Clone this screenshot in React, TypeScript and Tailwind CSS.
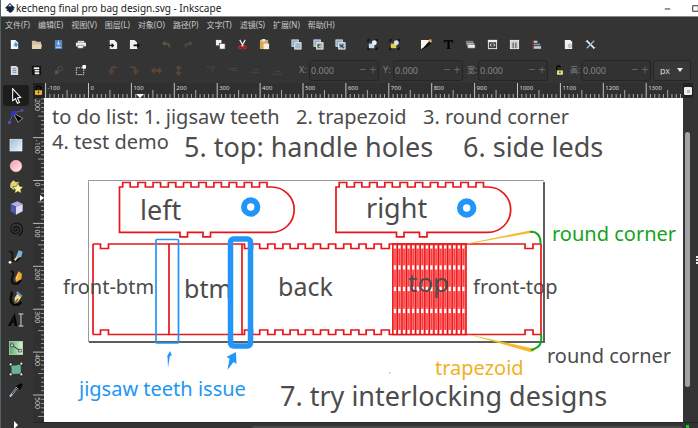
import React from "react";

const UI_FONT = "font-['Noto_Sans','Noto_Sans_CJK_SC',sans-serif]";
const NOTE_FONT = "font-['Noto_Sans',sans-serif]";

function Glyph({ children, big }: { children: React.ReactNode; big?: boolean }) {
  return (
    <svg viewBox="0 0 12 12" className={big ? "h-4 w-4 shrink-0" : "h-[11px] w-[11px] shrink-0"} aria-hidden="true">
      {children}
    </svg>
  );
}

const windows = (
  <>
    <rect x="1" y="1" width="7" height="7" fill="#8fa9bd" stroke="#dce6ee" strokeWidth="1" />
    <rect x="4" y="4" width="7" height="7" fill="#9db9ce" stroke="#e8eef2" strokeWidth="1" />
  </>
);

const commandGroups: { name: string; art: React.ReactNode }[][] = [
  [
    { name: "New", art: <><path d="M2 1h5l3 3v7H2z" fill="#f4f6f7" /><path d="M7 3l3 3-2 3-3-2z" fill="#5e9cd0" /></> },
    { name: "Open", art: <><path d="M1 2h4l1 1h5v7H1z" fill="#cfc0a6" /><path d="M2 6h10l-1 5H1z" fill="#e6d6ba" /></> },
    { name: "Save", art: <><rect x="2" y="1" width="8" height="10" rx="1" fill="#4f86c6" /><path d="M6 2v4M4 4.500l2 2 2-2M3 9h6" stroke="#dbe9f8" fill="none" /></> },
    { name: "Print", art: <><path d="M3 2h7v2H3z" fill="#ddd" /><rect x="1" y="4" width="11" height="4" fill="#e9e9e9" /><path d="M3 7h6v3H3z" fill="#fff" stroke="#555" strokeWidth=".6" /></> },
  ],
  [
    { name: "Import", art: <><path d="M3 1h5l3 3v7H3z" fill="#f4f4f4" /><path d="M2 7h4M5 5l2 2-2 2" stroke="#111" strokeWidth="1.300" fill="none" /></> },
    { name: "Export", art: <><path d="M1 1h5l3 3v7H1z" fill="#eee" /><path d="M5 6h4V4l3 3-3 3V8H5z" fill="#080808" /></> },
  ],
  [
    { name: "Undo", art: <path d="M5 2L1 5l4 3V6c4 0 4 2 3 5 4-4 2-7-3-7z" fill="#53613c" /> },
    { name: "Redo", art: <path d="M7 2l4 3-4 3V6C3 6 3 8 4 11 0 7 2 4 7 4z" fill="#43543b" /> },
  ],
  [
    { name: "Copy", art: <><rect x="1" y="1" width="6" height="6" fill="#eee" /><rect x="5" y="5" width="6" height="6" fill="#fafafa" stroke="#444" strokeWidth=".7" /></> },
    { name: "Cut", art: <><path d="M3 1l4 7M9 1L5 8" stroke="#eee" strokeWidth="1.300" /><circle cx="3.500" cy="9" r="1.600" fill="none" stroke="#d81f1f" strokeWidth="1.400" /><circle cx="8.500" cy="9" r="1.600" fill="none" stroke="#d81f1f" strokeWidth="1.400" /></> },
    { name: "Paste", art: <><rect x="1" y="1" width="9" height="10" fill="#d9a958" /><rect x="3" y="0" width="4" height="3" fill="#ddd" /><path d="M5 5h6v6H5z" fill="#f5efe2" /></> },
  ],
  [
    { name: "Duplicate", art: windows },
    { name: "Clone", art: <>{windows}<path d="M5 9V6h3v4z" fill="#2a2a2a" /><circle cx="7.500" cy="8" r="1.300" fill="#e9d36e" /></> },
    { name: "Unlink clone", art: <>{windows}<path d="M5 6l5 4M6 9l3-3" stroke="#2f4652" strokeWidth="1.200" /></> },
  ],
  [
    { name: "Group", art: <><path d="M1 3V1h2M9 1h2v2M11 9v2H9M3 11H1V9" stroke="#080808" fill="none" strokeWidth="1.200" /><rect x="2" y="5" width="6" height="5" fill="#c7dcea" /><circle cx="8" cy="4" r="2.700" fill="#edf4f8" /></> },
    { name: "Ungroup", art: <><path d="M1 3V1h2M9 1h2v2M11 9v2H9M3 11H1V9" stroke="#080808" fill="none" strokeWidth="1.200" /><rect x="2" y="5" width="6" height="5" fill="#e6cb4a" /><circle cx="8" cy="4" r="2.700" fill="#d8e4ee" /></> },
  ],
  [
    { name: "Fill and stroke", art: <><path d="M0 1h10L3 9l-3 2z" fill="#f6f6ee" /><path d="M1 11.500l8-8.500 2 2-7 5z" fill="#0a0a0a" /><path d="M8 1l3-1 1 3-2 1z" fill="#d4ab4a" /></> },
    { name: "Text and font", art: <path d="M1 1h10v3h-1L9 2.500H7.200V10l1.300.5v.5h-5v-.5L4.800 10V2.500H3L2 4H1z" fill="#050505" /> },
    { name: "Layers", art: <><path d="M1 2h8v4H1z" fill="#888" /><path d="M2 4h8v4H2z" fill="#bbb" stroke="#444" strokeWidth=".5" /><path d="M3 6h8v4H3z" fill="#ececec" stroke="#555" strokeWidth=".5" /></> },
    { name: "XML editor", art: <><rect x="1.500" y="1.500" width="9" height="9" fill="#444" stroke="#eee" /><path d="M1 1h10v2.500H1z" fill="#eee" /><path d="M5 5L3.500 6.500 5 8M7 5l1.500 1.500L7 8" stroke="#fff" fill="none" /></> },
    { name: "Selectors", art: <><rect x="1.500" y="1.500" width="9" height="9" fill="#ccc" stroke="#f0f0f0" /><path d="M4.500 4v6M7.500 4v6" stroke="#555" strokeWidth="1.200" /></> },
    { name: "Align", art: <><path d="M2 0v12" stroke="#b02020" /><path d="M3 2h4v2H3zM3 8h8v2.500H3z" fill="#c4d2dc" /><path d="M3 5h7v2H3z" fill="#7795ac" /></> },
  ],
  [
    { name: "Document properties", art: <><path d="M2 1h6l2 2v8H2z" fill="#f2f2f2" /><circle cx="7.500" cy="7.500" r="2" fill="#c9cdd0" stroke="#999" strokeWidth=".5" /></> },
    { name: "Preferences", art: <><path d="M2 2l8 8" stroke="#eee" strokeWidth="1.700" /><path d="M10 2L2 10" stroke="#93b5d0" strokeWidth="1.500" /><path d="M1 3l2-2M9 11l2-2" stroke="#fff" /></> },
  ],
];

const selectorGroups: { name: string; art: React.ReactNode }[][] = [
  [
    { name: "Select all", art: <><path d="M2 1h6l2 2v8H2z" fill="#d6dde2" /><path d="M4 4h4M4 6h4M4 8h4" stroke="#6d8ba2" /></> },
    { name: "Select in layers", art: <><rect x="1" y="1" width="10" height="10" fill="#111" /><path d="M3 2.500h6v2H3zM4 5.500h5v1.500H4zM4 8h5v2H4z" fill="#eee" /></> },
    { name: "Deselect", art: <><circle cx="8" cy="4" r="2.500" fill="none" stroke="#505050" /><path d="M2 6h4v4H2z" fill="#545454" /></> },
    { name: "Touch selection", art: <><rect x="1.500" y="3" width="8" height="7.500" fill="none" stroke="#eee" strokeDasharray="1.500 1" /><rect x="8" y="0" width="4" height="4" rx="1" fill="#fff" /></> },
  ],
  [
    { name: "Rotate left", art: <path d="M11 2C5 0 3 3 4 6H1l4 5 3-5H6c0-2 1-3 5-2z" fill="#594336" /> },
    { name: "Rotate right", art: <path d="M1 2c6-2 8 1 7 4h3l-4 5-3-5h2c0-2-1-3-5-2z" fill="#594336" /> },
    { name: "Flip horizontal", art: <path d="M0 6l4-4v3h4V2l4 4-4 4V7H4v3z" fill="#654431" /> },
    { name: "Flip vertical", art: <path d="M6 0l4 4H7v4h3l-4 4-4-4h3V4H2z" fill="#584536" /> },
  ],
  [
    { name: "Raise to top", art: <path d="M1 2h10M6 4h5M7 7h2" stroke="#474747" /> },
    { name: "Raise", art: <path d="M1 4h10M5 6h6" stroke="#484848" /> },
    { name: "Lower", art: <path d="M5 5h5M1 8h10" stroke="#484848" /> },
    { name: "Lower to bottom", art: <path d="M5 7h5M1 10h11" stroke="#51493f" /> },
  ],
];

const toolGroups: { name: string; art: React.ReactNode }[][] = [
  [
    { name: "Selector", art: <path d="M3.500 .5v9L5.600 8l1.500 3.500 1.500-.7L7.100 7.500 9.500 7z" fill="#111" stroke="#fff" strokeWidth=".8" /> },
    { name: "Node editor", art: <><path d="M1 10L4 3l7-2" stroke="#5256b4" fill="none" strokeWidth=".7" /><path d="M4 3l7 4-3.500 3z" fill="#050505" stroke="#ccc" strokeWidth=".5" /><rect x="2.500" y="1.500" width="3" height="3" fill="#2830ee" /><rect x="9.500" y="0" width="2" height="2" fill="#4c51b4" /><rect x="0" y="9" width="2.300" height="2.300" fill="#4c51b4" /></> },
  ],
  [
    { name: "Rectangle", art: <><defs><linearGradient id="sky" x2="1" y2="1"><stop stopColor="#9dbcdc" /><stop offset="1" stopColor="#eff7ff" /></linearGradient></defs><rect x="1.500" y="1.700" width="9" height="8.800" fill="url(#sky)" stroke="#e8f2f8" strokeWidth=".5" /></> },
    { name: "Ellipse", art: <><defs><linearGradient id="rose" x2="1" y2="1"><stop stopColor="#ff94a8" /><stop offset="1" stopColor="#fff0f0" /></linearGradient></defs><circle cx="6" cy="6" r="4.300" fill="url(#rose)" stroke="#f5c9ce" strokeWidth=".5" /></> },
    { name: "Star", art: <><path d="M4 1l2 1.500 2-.5v3L7 7 4 8 1.500 6 2 3z" fill="#e3d36d" /><path d="M7.500 3l1.200 2.500 2.800.3-2 2 .5 2.900-2.500-1.400L5 10.700l.5-2.900-2-2 2.800-.3z" fill="#fbf39b" stroke="#302f22" strokeWidth=".4" /></> },
    { name: "3D box", art: <><path d="M2 3l5-2 4 2-5 2z" fill="#aeb0e8" /><path d="M2 3l4 2v6L2 8.500z" fill="#5556a4" /><path d="M6 5l5-2v5.500L6 11z" fill="#d9dafa" /></> },
    { name: "Spiral", art: <path d="M6 6.500c.5-1 1.500.5 0 1C4 8 3.500 4.500 6 4.200c3.500-.2 3.800 5 0 5.300C1 10 .5 2 6 1.500c5.500-.2 6.500 7 2 9.500" fill="none" stroke="#101010" strokeWidth=".8" /> },
  ],
  [
    { name: "Pencil", art: <><path d="M1 2c5-1 0 7 4 7s4-4 5-4" stroke="#111" strokeWidth="1.300" fill="none" /><path d="M8 1l3 1-1 4-3 1-1-1z" fill="#7fb4d4" /><path d="M7 6L5 8.500" stroke="#edd08c" strokeWidth="1.500" /><circle cx="1.500" cy="10" r="1" fill="#fff" /></> },
    { name: "Pen", art: <><path d="M2 1c5 0-2 7 2 9s5-2 6-3" stroke="#0c0c0c" strokeWidth="1.500" fill="none" /><path d="M8 1l2.500 2-.5 4-4 2-.5-3z" fill="#f1a934" /><path d="M8 1l-1 5-1.500 2z" fill="#ffe5a0" /></> },
    { name: "Calligraphy", art: <><path d="M2 1c3 0-3 6 2 9 3 1 5 0 6-2" stroke="#080808" strokeWidth="1.700" fill="none" /><path d="M7 2l3 2.500-2 3L5 9.500V5z" fill="#f2d893" /><path d="M7 0l4 3.500-1 1-4-3z" fill="#6b92bb" /><path d="M5 9l2.500-3" stroke="#3d331d" strokeWidth=".8" /></> },
    { name: "Text", art: <><path d="M0 10.500L5 1l2 9.500H5L4.500 8H3l-1 2.500zM4 4L3.300 6.800h1z" fill="#050505" fillRule="evenodd" /><path d="M8 1.500h3.500M8 10.500h3.500M9.700 1.500v9" stroke="#aaa" /></> },
  ],
  [
    { name: "Gradient", art: <><defs><linearGradient id="leaf" x2="1"><stop stopColor="#58a66a" /><stop offset="1" stopColor="#dff5df" /></linearGradient></defs><rect x="1" y="1" width="10" height="10" fill="url(#leaf)" stroke="#b6dcba" strokeWidth=".5" /><path d="M3 4l6 4" stroke="#222" strokeWidth=".7" /><path d="M2 3h2v2H2zM8 7h2v2H8z" fill="#d9f6db" stroke="#222" strokeWidth=".5" /></> },
    { name: "Mesh", art: <><path d="M2 3c3 1 5 0 8-1-1 3 0 6 0 8-3-1-5 0-8 0 1-2 1-4 0-7z" fill="#6bb196" /><path d="M1 1.500h2v2H1zM9 1h2v2H9zM9 9h2v2H9zM1 9h2v2H1z" fill="#fff" stroke="#111" strokeWidth=".5" /></> },
    { name: "Dropper", art: <><path d="M1.500 11L7 4" stroke="#a9cbd2" strokeWidth="1.500" /><path d="M3 9l5-6" stroke="#111" strokeWidth=".7" /><path d="M6 3l3 3 2-4-1-1z" fill="#050505" /></> },
  ],
];

const menus = ["文件(F)", "编辑(E)", "视图(V)", "图层(L)", "对象(O)", "路径(P)", "文字(T)", "滤镜(S)", "扩展(N)", "帮助(H)"];

const PITCH = 42.9;

function HorizontalRuler() {
  return (
    <svg className="block h-[15px] w-full bg-[#303030]" aria-label="Horizontal ruler">
      {Array.from({ length: 149 }, (_, i) => i - 10).map((n) => {
        const x = 44.5 + (n * PITCH) / 10;
        const major = n % 10 === 0;
        return (
          <g key={n}>
            <path d={`M${x} ${major ? 0 : n % 5 === 0 ? 7 : 11}V15`} stroke={major ? "#c4c4c4" : "#aaaaaa"} />
            {major && <text x={x + 2} y="7" fontSize="6" fill="#d8d8d8">{n * 10}</text>}
          </g>
        );
      })}
      <path d="M92 11h8l-4 4z" fill="#fff" />
    </svg>
  );
}

function VerticalRuler() {
  return (
    <svg className="block min-h-0 w-[11px] flex-1 bg-[#303030]" aria-label="Vertical ruler">
      {Array.from({ length: 76 }, (_, i) => i - 20).map((n) => {
        const y = 82.5 + (n * PITCH) / 10;
        const major = n % 10 === 0;
        return (
          <g key={n}>
            <path d={`M${major ? 0 : n % 5 === 0 ? 5 : 8} ${y}H11`} stroke={major ? "#bbbbbb" : "#999999"} />
            {major && (
              <text transform={`translate(2 ${y + 2}) rotate(90)`} fontSize="7" fill="#c4c4c4">
                {n * 10}
              </text>
            )}
          </g>
        );
      })}
      <path d="M7 97v6l4-3z" fill="#fff" />
    </svg>
  );
}

function sidePanel(x: number) {
  let d = `M${x} 187H${x + 3.2}`;
  for (let k = 0; k < 10; k++) {
    const s = x + 3.2 + k * 15.2;
    d += `V182.500H${s + 7.5}V187H${k < 9 ? s + 15.2 : x + 152}`;
  }
  return d + `A22.700 22.700 0 0 1 ${x + 152} 232.400H${x + 91}V236.800H${x + 83.5}V232.400H${x + 68}V236.800H${x + 60.5}V232.400H${x}Z`;
}

function stripEdge(y: number, depth: number) {
  const teeth = [100.5, ...Array.from({ length: 10 }, (_, k) => 244.5 + k * 15.2), 525];
  return `M93 ${y}` + teeth.map((t) => `H${t}V${y + depth}H${t + 8}V${y}`).join("") + "H541";
}

function Drawing() {
  return (
    <svg viewBox="44 98 639 324" className="absolute left-0 top-0 h-[324px] w-[639px]" aria-label="Bag cutting pattern">
      <path d="M88.500 342V180.500H544" fill="none" stroke="#9a9a9a" />
      <path d="M544 182V342H89" fill="none" stroke="#5e5e5e" strokeWidth="2" />
      <g fill="none" stroke="#e5171a" strokeWidth="1.700">
        <path d={sidePanel(119.5)} />
        <path d={sidePanel(336)} />
        <path d={stripEdge(244, 4.5)} />
        <path d={stripEdge(334.5, -4.5)} />
        <path d="M93 244V334.500M541 244V334.500M169 244V334.500M242 244V334.500" />
      </g>
      <rect x="392" y="244" width="75" height="91" fill="#ff7676" />
      {[245.5, 265.5, 287, 309, 330].map((y) =>
        Array.from({ length: 16 }, (_, i) => (
          <rect key={`${y}-${i}`} x={393.6 + i * 4.57} y={y} width="2.400" height={y === 245.5 ? 3 : 4} fill="#fff" />
        )),
      )}
      {Array.from({ length: 17 }, (_, i) => (
        <path key={i} d={`M${392.8 + i * 4.57} 244V335`} stroke="#ea1216" strokeWidth="1.300" />
      ))}
      {[249, 270, 291.5, 313.5].map((y, r) =>
        Array.from({ length: 16 }, (_, i) => (
          <path key={`${r}-${i}`} d={`M${395 + i * 4.57} ${y}v16`} stroke="#f3282c" strokeWidth=".8" />
        )),
      )}
      <path d="M392 244H467M392 334.500H467" stroke="#e5171a" strokeWidth="1.700" />
      <path d="M467 243.500L530 230.500l3 2-65 11.500z" fill="#f3ba2c" />
      <path d="M467 334l64 14 4 3-5 1z" fill="#f3ba2c" />
      <path d="M530 232c6-1 11 3 10.500 12M541 334c1 9 0 13-10 16" stroke="#14a41c" strokeWidth="2" fill="none" />
      <rect x="389" y="372" width="1.500" height="1.500" fill="#f3ba2c" />
    </svg>
  );
}

function Markup() {
  return (
    <svg viewBox="44 98 639 324" className="pointer-events-none absolute left-0 top-0 h-[324px] w-[639px]" aria-label="Problem areas">
      <g fill="none" stroke="#2196f8">
        <circle cx="250.700" cy="207" r="6.700" strokeWidth="6" />
        <circle cx="466.700" cy="208" r="6.700" strokeWidth="6" />
        <rect x="156" y="239.500" width="22.500" height="103.500" rx="1" strokeWidth="1.700" />
        <rect x="230.500" y="239" width="20" height="107" rx="3" strokeWidth="5.500" />
      </g>
      <path d="M170 351l2 5-2-.5-2 12-.500-11-1 1zM236 352l-9.500 5 3 1.500-2 11.500 6-8 3 2z" fill="#2196f8" />
    </svg>
  );
}

const labels: { text: string; cls: string }[] = [
  { text: "left", cls: "left-[96px] top-[98px] text-[27px]" },
  { text: "right", cls: "left-[322px] top-[96px] text-[27px]" },
  { text: "front-btm", cls: "left-[19px] top-[179px] text-[20px]" },
  { text: "btm", cls: "left-[140px] top-[178px] text-[25px]" },
  { text: "back", cls: "left-[234px] top-[176px] text-[25px]" },
  { text: "top", cls: "left-[364px] top-[171px] text-[26px]" },
  { text: "front-top", cls: "left-[429px] top-[179px] text-[20px]" },
  { text: "round corner", cls: "left-[508px] top-[126px] text-[20px] text-[#15a31b]" },
  { text: "round corner", cls: "left-[503px] top-[248px] text-[20px]" },
  { text: "trapezoid", cls: "left-[391px] top-[260px] text-[20px] text-[#f2b11c]" },
  { text: "jigsaw teeth issue", cls: "left-[35px] top-[281px] text-[20px] text-[#2196f3]" },
  { text: "7. try interlocking designs", cls: "left-[236px] top-[284px] text-[27px]" },
  { text: "to do list: 1. jigsaw teeth", cls: "left-[8px] top-[9px] text-[20px]" },
  { text: "2. trapezoid", cls: "left-[252px] top-[9px] text-[20px]" },
  { text: "3. round corner", cls: "left-[379px] top-[9px] text-[20px]" },
  { text: "4. test demo", cls: "left-[8px] top-[34px] text-[20px]" },
  { text: "5. top: handle holes", cls: "left-[140px] top-[35px] text-[27px]" },
  { text: "6. side leds", cls: "left-[419px] top-[35px] text-[27px]" },
];

function IconBar({ groups }: { groups: { name: string; art: React.ReactNode }[][] }) {
  return (
    <div className="flex shrink-0 gap-[10px]">
      {groups.map((group, i) => (
        <div key={i} className="flex">
          {group.map((item) => (
            <button key={item.name} type="button" aria-label={item.name} className="flex h-5 w-[22px] items-center justify-center">
              <Glyph>{item.art}</Glyph>
            </button>
          ))}
        </div>
      ))}
    </div>
  );
}

function NumberField({ id, label, labelClass }: { id: string; label: string; labelClass: string }) {
  return (
    <div className="flex shrink-0 items-center text-[9px] text-[#858585]">
      <label htmlFor={id} className={labelClass}>{label}</label>
      <div className="flex h-[21px] w-[70px] items-center rounded-[3px] border border-[#252525] bg-[#323232]">
        <input id={id} defaultValue="0.000" className="h-full w-0 min-w-0 flex-1 bg-transparent pl-px outline-none" />
        <button type="button" aria-label={`Decrease ${label}`} className="w-[10px] text-[12px] leading-none text-[#666]">−</button>
        <button type="button" aria-label={`Increase ${label}`} className="w-[10px] text-[12px] leading-none text-[#666]">+</button>
      </div>
    </div>
  );
}

function Padlock() {
  return (
    <Glyph>
      <path d="M3.500 6V3.500c0-3 5-3 5 0V6" fill="none" stroke="#050505" strokeWidth="1.500" />
      <rect x="2" y="5.500" width="8" height="5.500" fill="#f3b63c" stroke="#141414" strokeWidth=".5" />
      <path d="M6 7v2" stroke="#221900" strokeWidth="1.300" />
    </Glyph>
  );
}

export default function App() {
  return (
    <div className={`flex h-screen flex-col overflow-hidden border-l border-[#53616b] bg-[#343434] ${UI_FONT}`}>
      <header className="flex h-[17px] shrink-0 items-center justify-between overflow-hidden border-b border-[#8b8b8b] bg-white pl-1 text-[10px] text-[#181818]">
        <div className="flex items-center gap-px">
          <svg viewBox="0 0 12 12" className="h-[10px] w-[10px]" aria-hidden="true">
            <path d="M6 0l6 6-2 1 1 1.500-2 .5.5 1L6 12 4 10l-2.500-1L3 7.500 0 6z" fill="#10243c" />
            <path d="M6 1.500l2 2-1 .8L6 3.500l-1 1-1-1z" fill="#dceaf5" />
          </svg>
          <h1 className="leading-none">kecheng final pro bag design.svg - Inkscape</h1>
        </div>
        <div className="-mr-[11px] flex">
          <button type="button" aria-label="Minimize" className="flex h-4 w-7 items-center justify-center"><Glyph><path d="M3 6.500h6" stroke="#222" /></Glyph></button>
          <button type="button" aria-label="Maximize" className="flex h-4 w-7 items-center justify-center"><Glyph><rect x="3" y="3" width="6" height="6" fill="none" stroke="#222" /></Glyph></button>
        </div>
      </header>

      <nav className="flex h-[15px] shrink-0 items-center gap-2 pl-1 text-[8px] text-[#c9c9c9]">
        {menus.map((m) => (
          <button key={m} type="button" className="whitespace-nowrap leading-none">{m}</button>
        ))}
      </nav>

      <div className="flex h-[25px] shrink-0 items-center pl-[2px]">
        <IconBar groups={commandGroups} />
      </div>

      <div className="flex h-[26px] shrink-0 items-center pl-[2px]">
        <IconBar groups={selectorGroups} />
        <div className="ml-3 flex gap-1">
          <NumberField id="pos-x" label="X:" labelClass="w-[10px]" />
          <NumberField id="pos-y" label="Y:" labelClass="w-[10px]" />
          <NumberField id="size-w" label="宽:" labelClass="w-[11px] text-[8px]" />
        </div>
        <button type="button" aria-label="Lock proportions" className="flex h-5 w-[22px] shrink-0 items-center justify-center">
          <Glyph>
            <path d="M3 6V3c0-3 4-2 4 0" fill="none" stroke="#050505" strokeWidth="1.500" />
            <rect x="3" y="5.500" width="7" height="5.500" fill="#ebe08b" stroke="#111" strokeWidth=".6" />
            <path d="M6.500 7v2" stroke="#111" strokeWidth="1.200" />
          </Glyph>
        </button>
        <NumberField id="size-h" label="高:" labelClass="w-[11px] text-[8px]" />
        <div className="ml-[2px] grid shrink-0 items-center">
          <select aria-label="Unit" className="col-start-1 row-start-1 h-[21px] w-[38px] appearance-none rounded-[3px] border border-[#252525] bg-[#383838] pl-[6px] text-[9px] leading-none text-[#d0d0d0]">
            <option>px</option>
            <option>mm</option>
          </select>
          <svg viewBox="0 0 6 4" className="pointer-events-none col-start-1 row-start-1 mr-2 h-1 w-[6px] justify-self-end" aria-hidden="true"><path d="M0 0h6L3 4z" fill="#e8e8e8" /></svg>
        </div>
      </div>

      <div className="flex min-h-0 flex-1">
        <aside className="flex w-8 shrink-0 flex-col gap-[7px] overflow-hidden pl-[2px] pt-[2px]">
          {toolGroups.map((group, g) => (
            <div key={g} className="flex shrink-0 flex-col">
              {group.map((t) => (
                <button
                  key={t.name}
                  type="button"
                  aria-label={t.name}
                  className={t.name === "Selector" ? "flex h-[21px] w-[26px] items-center justify-center rounded-[3px] bg-[#1d1d1d]" : "flex h-[21px] w-[26px] items-center justify-center"}
                >
                  <Glyph big>{t.art}</Glyph>
                </button>
              ))}
            </div>
          ))}
          <button type="button" aria-label="More tools" className="mt-[14px] flex w-[26px] justify-center">
            <svg viewBox="0 0 6 8" className="h-2 w-[6px]" aria-hidden="true"><path d="M1 0l4 4-4 4z" fill="#fff" /></svg>
          </button>
        </aside>

        <div className="flex min-w-0 flex-1 flex-col">
          <div className="flex min-h-0 flex-1">
            <div className="flex w-[11px] shrink-0 flex-col">
              <button type="button" aria-label="Lock guides" className="flex h-[15px] items-center justify-center bg-[#202020]"><Padlock /></button>
              <VerticalRuler />
            </div>
            <div className="flex min-w-0 flex-1 flex-col">
              <HorizontalRuler />
              <main className={`relative min-h-0 flex-1 overflow-hidden bg-white text-[#4c4c4c] ${NOTE_FONT}`}>
                <Drawing />
                {labels.map((l, i) => (
                  <p key={i} className={`absolute whitespace-nowrap leading-none ${l.cls}`}>{l.text}</p>
                ))}
                <Markup />
              </main>
            </div>
            <div className="flex w-[15px] shrink-0 flex-col items-start">
              <button type="button" aria-label="Color managed view" className="flex h-[15px] w-[10px] items-center justify-center rounded-[2px] bg-[#222]">
                <svg viewBox="0 0 8 8" className="h-2 w-2" aria-hidden="true"><rect x="0" y="0" width="8" height="8" rx="1" fill="#eee" /><path d="M3 3h3v3H3z" fill="#bbb" /></svg>
              </button>
              <div className="flex min-h-0 w-full flex-1 items-start justify-between pl-[2px] pt-[34px]">
                <div className="h-[88%] w-[5px] rounded-full bg-[#a3a3a3]" />
                <svg viewBox="0 0 2 8" className="mt-[124px] h-2 w-[2px]" aria-hidden="true"><path d="M0 0h2v2H0zM0 3h2v2H0zM0 6h2v2H0z" fill="#eee" /></svg>
              </div>
            </div>
          </div>
          <footer className="flex h-[6px] shrink-0 items-end justify-end border-t border-[#242424] pr-[9px]">
            <div className="mr-1 h-[2px] w-[430px] rounded-full bg-[#484848]" />
            <div className="h-[3px] w-[3px] bg-[#16c928]" />
          </footer>
        </div>
      </div>
    </div>
  );
}
